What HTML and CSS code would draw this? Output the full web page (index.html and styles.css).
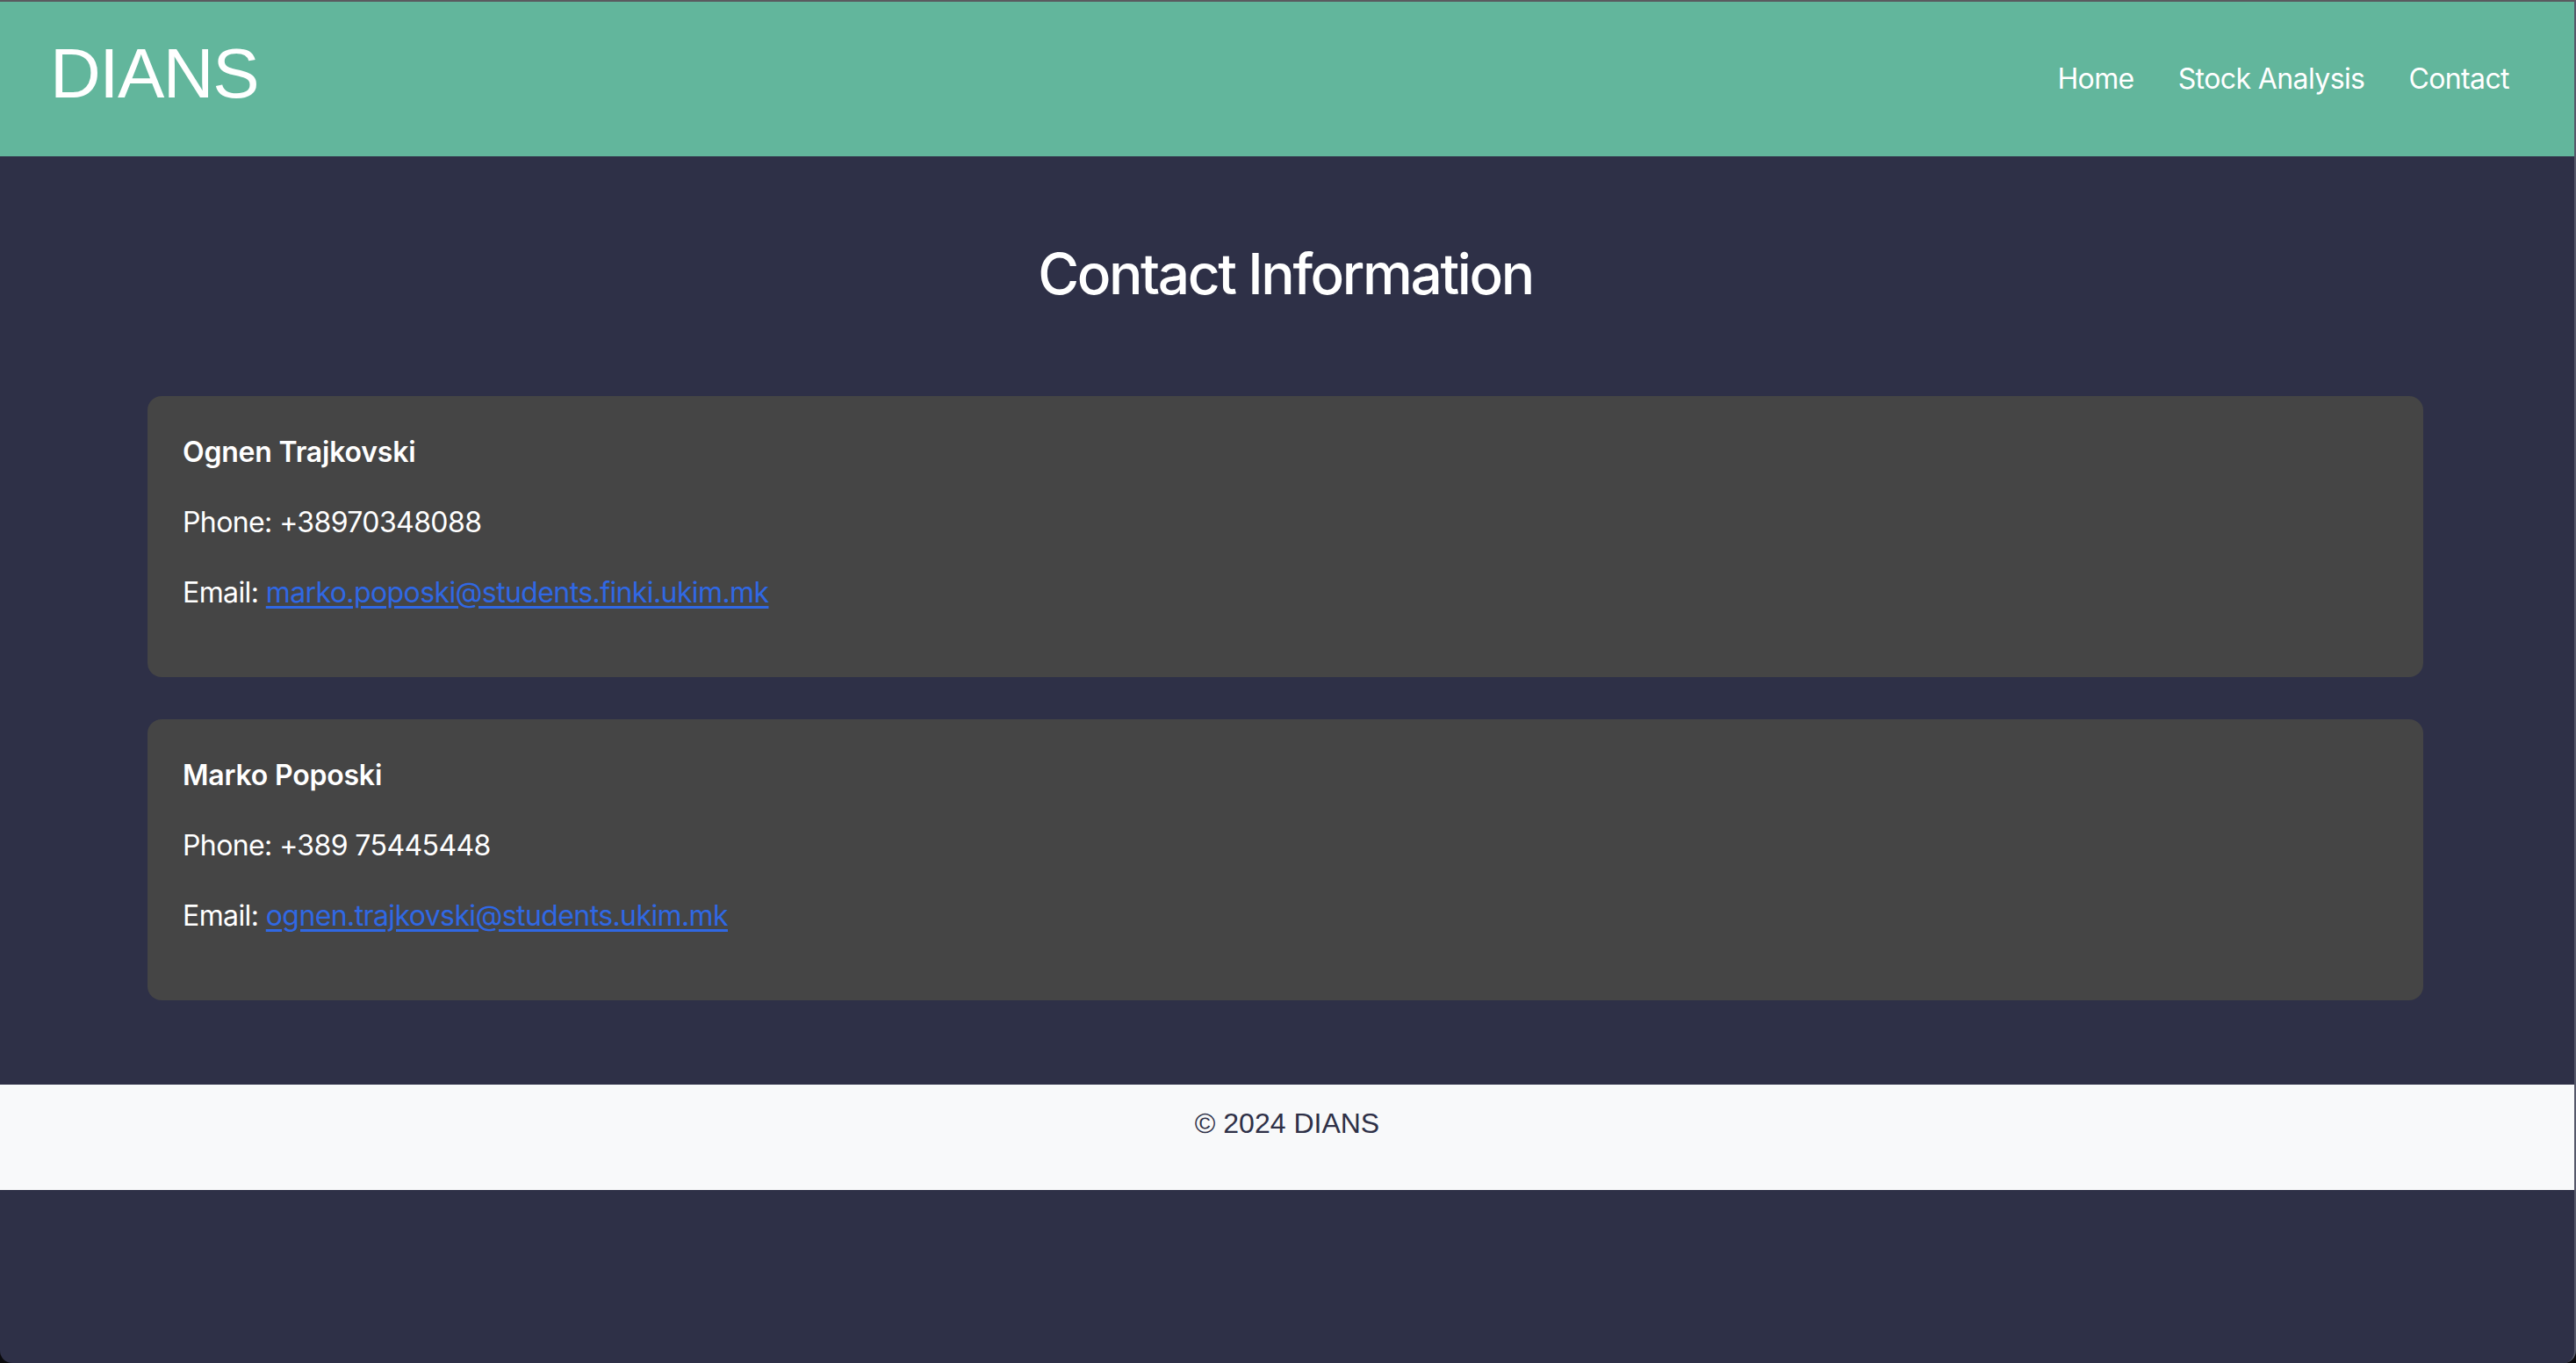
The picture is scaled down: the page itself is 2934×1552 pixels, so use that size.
FILE: index.html
```html
<!DOCTYPE html>
<html lang="en">
<head>
<meta charset="utf-8">
<title>Contact - DIANS</title>
<link rel="stylesheet" href="styles.css">
</head>
<body>
<div class="window">
  <header class="site-header">
    <a class="brand" href="#">DIANS</a>
    <nav class="nav">
      <a class="nav-link" href="#">Home</a>
      <a class="nav-link" href="#">Stock Analysis</a>
      <a class="nav-link" href="#">Contact</a>
    </nav>
  </header>
  <main class="container">
    <h1 class="page-title">Contact Information</h1>
    <section class="contact-card">
      <p class="contact-name">Ognen Trajkovski</p>
      <p>Phone: +38970348088</p>
      <p>Email: <a class="mail" href="mailto:marko.poposki@students.finki.ukim.mk">marko.poposki@students.finki.ukim.mk</a></p>
    </section>
    <section class="contact-card">
      <p class="contact-name">Marko Poposki</p>
      <p>Phone: +389 75445448</p>
      <p>Email: <a class="mail" href="mailto:ognen.trajkovski@students.ukim.mk">ognen.trajkovski@students.ukim.mk</a></p>
    </section>
  </main>
  <footer class="site-footer">
    <p>© 2024 DIANS</p>
  </footer>
</div>
</body>
</html>
```

FILE: styles.css
```css
* { box-sizing: border-box; }

html { background: #0b0b0e; }

body {
  margin: 0;
  font-family: Inter, "Noto Sans", sans-serif;
  color: #ffffff;
}

.window {
  min-height: 100vh;
  background: #2e3047;
  border-top: 2px solid #5a5a5f;
  border-right: 2px solid #56586a;
  border-radius: 0 0 14px 14px;
  overflow: hidden;
}

.site-header {
  height: 176px;
  background: #62b69c;
  display: flex;
  align-items: center;
  justify-content: space-between;
  padding: 0 74px 0 57px;
}

.brand {
  font-family: "Liberation Sans", Arial, sans-serif;
  font-size: 80px;
  line-height: 1;
  letter-spacing: -1.5px;
  color: #ffffff;
  text-decoration: none;
  margin-bottom: 12px;
}

.nav {
  display: flex;
  gap: 50px;
}

.nav-link {
  font-size: 32px;
  line-height: 48px;
  letter-spacing: -0.6px;
  color: #ffffff;
  text-decoration: none;
}

.container {
  margin: 0 172px 0 168px;
  padding: 96px 0 48px;
}

.page-title {
  margin: 0 0 100px;
  text-align: center;
  font-size: 64px;
  line-height: 1.2;
  font-weight: 500;
  letter-spacing: -2.4px;
}

.contact-card {
  background: #454545;
  border-radius: 16px;
  padding: 40px;
  margin-bottom: 48px;
}

.contact-card p {
  margin: 0 0 32px;
  font-size: 32px;
  line-height: 48px;
  letter-spacing: -0.6px;
}

.contact-card .contact-name {
  font-weight: 600;
  letter-spacing: -0.2px;
}

.mail {
  color: #3068e4;
  text-decoration: underline;
  text-underline-offset: 4px;
}

.site-footer {
  background: #f8f9fa;
  padding: 20px 0;
  text-align: center;
  color: #2e3047;
  font-family: "Liberation Sans", Arial, sans-serif;
}

.site-footer p {
  margin: 0 0 32px;
  font-size: 32px;
  line-height: 48px;
}
```
